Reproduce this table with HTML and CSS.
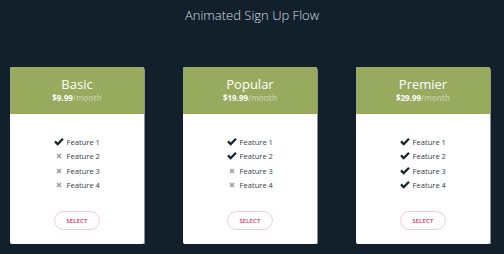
FILE: index.html
```html
<!DOCTYPE html>
<html>
<head>
<meta charset="utf-8">
<link rel="stylesheet" href="styles.css">
</head>
<body>
<h1 class="title">Animated Sign Up Flow</h1>
<div class="plans">
  <div class="card">
    <div class="head">
      <div class="name">Basic</div>
      <div class="price"><b>$9.99</b><span>/month</span></div>
    </div>
    <div class="body">
      <ul class="features">
        <li><span class="ic"><svg class="chk" viewBox="0 0 12 10"><polygon points="0,5.2 2,3.2 4.4,5.6 10,0 12,2 4.4,9.6"/></svg></span>Feature 1</li>
        <li><span class="ic"><svg class="x" viewBox="0 0 6 6"><path d="M1 1L5 5M5 1L1 5"/></svg></span>Feature 2</li>
        <li><span class="ic"><svg class="x" viewBox="0 0 6 6"><path d="M1 1L5 5M5 1L1 5"/></svg></span>Feature 3</li>
        <li><span class="ic"><svg class="x" viewBox="0 0 6 6"><path d="M1 1L5 5M5 1L1 5"/></svg></span>Feature 4</li>
      </ul>
      <button class="btn">SELECT</button>
    </div>
  </div>
  <div class="card">
    <div class="head">
      <div class="name">Popular</div>
      <div class="price"><b>$19.99</b><span>/month</span></div>
    </div>
    <div class="body">
      <ul class="features">
        <li><span class="ic"><svg class="chk" viewBox="0 0 12 10"><polygon points="0,5.2 2,3.2 4.4,5.6 10,0 12,2 4.4,9.6"/></svg></span>Feature 1</li>
        <li><span class="ic"><svg class="chk" viewBox="0 0 12 10"><polygon points="0,5.2 2,3.2 4.4,5.6 10,0 12,2 4.4,9.6"/></svg></span>Feature 2</li>
        <li><span class="ic"><svg class="x" viewBox="0 0 6 6"><path d="M1 1L5 5M5 1L1 5"/></svg></span>Feature 3</li>
        <li><span class="ic"><svg class="x" viewBox="0 0 6 6"><path d="M1 1L5 5M5 1L1 5"/></svg></span>Feature 4</li>
      </ul>
      <button class="btn">SELECT</button>
    </div>
  </div>
  <div class="card">
    <div class="head">
      <div class="name">Premier</div>
      <div class="price"><b>$29.99</b><span>/month</span></div>
    </div>
    <div class="body">
      <ul class="features">
        <li><span class="ic"><svg class="chk" viewBox="0 0 12 10"><polygon points="0,5.2 2,3.2 4.4,5.6 10,0 12,2 4.4,9.6"/></svg></span>Feature 1</li>
        <li><span class="ic"><svg class="chk" viewBox="0 0 12 10"><polygon points="0,5.2 2,3.2 4.4,5.6 10,0 12,2 4.4,9.6"/></svg></span>Feature 2</li>
        <li><span class="ic"><svg class="chk" viewBox="0 0 12 10"><polygon points="0,5.2 2,3.2 4.4,5.6 10,0 12,2 4.4,9.6"/></svg></span>Feature 3</li>
        <li><span class="ic"><svg class="chk" viewBox="0 0 12 10"><polygon points="0,5.2 2,3.2 4.4,5.6 10,0 12,2 4.4,9.6"/></svg></span>Feature 4</li>
      </ul>
      <button class="btn">SELECT</button>
    </div>
  </div>
</div>
</body>
</html>
```
FILE: styles.css
```css
html, body {
  margin: 0;
  padding: 0;
  background: #11202b;
  font-family: "Open Sans", "DejaVu Sans", sans-serif;
}
.title {
  margin: 0;
  padding-top: 6px;
  font-size: 13px;
  line-height: 18px;
  font-weight: 300;
  color: #d3dce4;
  text-align: center;
}
.plans {
  display: flex;
  gap: 39px;
  padding-left: 10px;
  margin-top: 43px;
}
.card {
  width: 134px;
  background: #fff;
  border-radius: 2px;
  overflow: hidden;
  box-shadow: 1px 1px 0 #8a9096;
}
.head {
  background: #97aa5d;
  text-align: center;
  padding: 8px 0 10px;
  height: 28.5px;
}
.name {
  font-size: 13px;
  line-height: 18px;
  color: #fff;
}
.price {
  font-size: 8px;
  line-height: 10px;
  color: #fff;
}
.price b {
  font-weight: 700;
}
.price span {
  color: #c6d0a4;
  font-weight: 600;
}
.body {
  display: flex;
  flex-direction: column;
  align-items: center;
  padding: 21px 0 14px;
}
.features {
  list-style: none;
  margin: 0;
  padding: 0;
}
.features li {
  display: flex;
  align-items: center;
  height: 14.5px;
  font-size: 7.6px;
  color: #333d47;
}
.ic {
  width: 12.5px;
  display: flex;
  align-items: center;
}
.chk {
  width: 10px;
  height: 8px;
  fill: #17252f;
}
.x {
  width: 6px;
  height: 6px;
  margin-left: 1.5px;
  stroke: #9c9c9c;
  stroke-width: 1.5;
  fill: none;
}
.btn {
  margin-top: 18px;
  width: 46px;
  height: 19px;
  border: 1px solid #f6cbd7;
  border-radius: 10px;
  background: #fff;
  padding: 0;
  font-family: "Lato", "Open Sans", sans-serif;
  font-weight: 900;
  font-size: 5.6px;
  letter-spacing: 0.3px;
  color: #de5079;
}
```
